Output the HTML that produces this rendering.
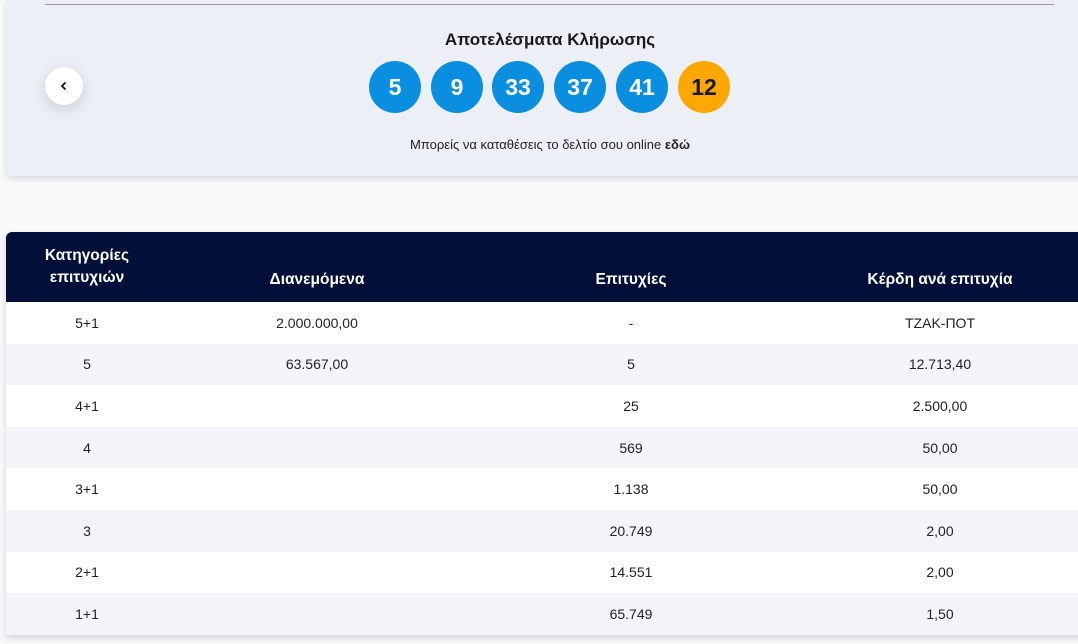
<!DOCTYPE html>
<html><head><meta charset="utf-8"><style>
*{margin:0;padding:0;box-sizing:border-box}
body{width:1078px;height:644px;overflow:hidden;background:#f8f9fb;font-family:"Liberation Sans","DejaVu Sans",sans-serif;position:relative;color:#1a1a1a}
.card{position:absolute;left:6px;top:0;width:1080px;height:176px;background:#eceff6;border-radius:0 0 6px 6px;box-shadow:0 3px 6px rgba(0,0,0,.12)}
.line{position:absolute;left:45px;top:4px;width:1009px;height:1px;background:#999}
.back{position:absolute;left:45px;top:67px;width:38px;height:38px;border-radius:50%;background:#fff;box-shadow:0 4px 14px rgba(0,0,0,.15);display:flex;align-items:center;justify-content:center}
h1{position:absolute;top:30px;left:0;width:1100px;text-align:center;font-size:17px;font-weight:bold;color:#1a1a1a}
.ball{position:absolute;top:61px;width:52px;height:52px;border-radius:50%;background:#0a8fe0;color:#fff;font-weight:bold;font-size:23px;display:flex;align-items:center;justify-content:center}
.note{position:absolute;top:137px;left:0;width:1100px;text-align:center;font-size:13px;color:#222}
table{position:absolute;left:6px;top:232px;width:1080px;border-collapse:collapse;box-shadow:0 3px 6px rgba(0,0,0,.15)}
th{background:#020f38;color:#fff;font-size:15.5px;height:70px;vertical-align:bottom;padding-bottom:13px;font-weight:bold}
th:first-child{border-top-left-radius:6px;line-height:22px}
td{height:41.6px;padding:0;text-align:center;font-size:14px;color:#222;background:#fff}
tr:nth-child(odd) td{background:#f3f4f7}
</style></head><body>
<div class="card">
</div>
<div class="line"></div>
<div class="back"><svg width="10" height="10" viewBox="0 0 10 10"><path d="M6.5 1.5L3 5l3.5 3.5" stroke="#111" stroke-width="1.8" fill="none"/></svg></div>
<h1>Αποτελέσματα Κλήρωσης</h1>
<div class="ball" style="left:369px">5</div>
<div class="ball" style="left:431px">9</div>
<div class="ball" style="left:492px">33</div>
<div class="ball" style="left:554px">37</div>
<div class="ball" style="left:616px">41</div>
<div class="ball" style="left:678px;background:#fca800;color:#1a1a1a">12</div>
<div class="note">Μπορείς να καταθέσεις το δελτίο σου online <b>εδώ</b></div>
<table>
<tr><th style="width:162px">Κατηγορίες<br>επιτυχιών</th><th style="width:298px">Διανεμόμενα</th><th style="width:330px">Επιτυχίες</th><th style="width:288px">Κέρδη ανά επιτυχία</th><th></th></tr>
<tr><td>5+1</td><td>2.000.000,00</td><td>-</td><td>ΤΖΑΚ-ΠΟΤ</td><td></td></tr>
<tr><td>5</td><td>63.567,00</td><td>5</td><td>12.713,40</td><td></td></tr>
<tr><td>4+1</td><td></td><td>25</td><td>2.500,00</td><td></td></tr>
<tr><td>4</td><td></td><td>569</td><td>50,00</td><td></td></tr>
<tr><td>3+1</td><td></td><td>1.138</td><td>50,00</td><td></td></tr>
<tr><td>3</td><td></td><td>20.749</td><td>2,00</td><td></td></tr>
<tr><td>2+1</td><td></td><td>14.551</td><td>2,00</td><td></td></tr>
<tr><td>1+1</td><td></td><td>65.749</td><td>1,50</td><td></td></tr>
</table>
</body></html>
